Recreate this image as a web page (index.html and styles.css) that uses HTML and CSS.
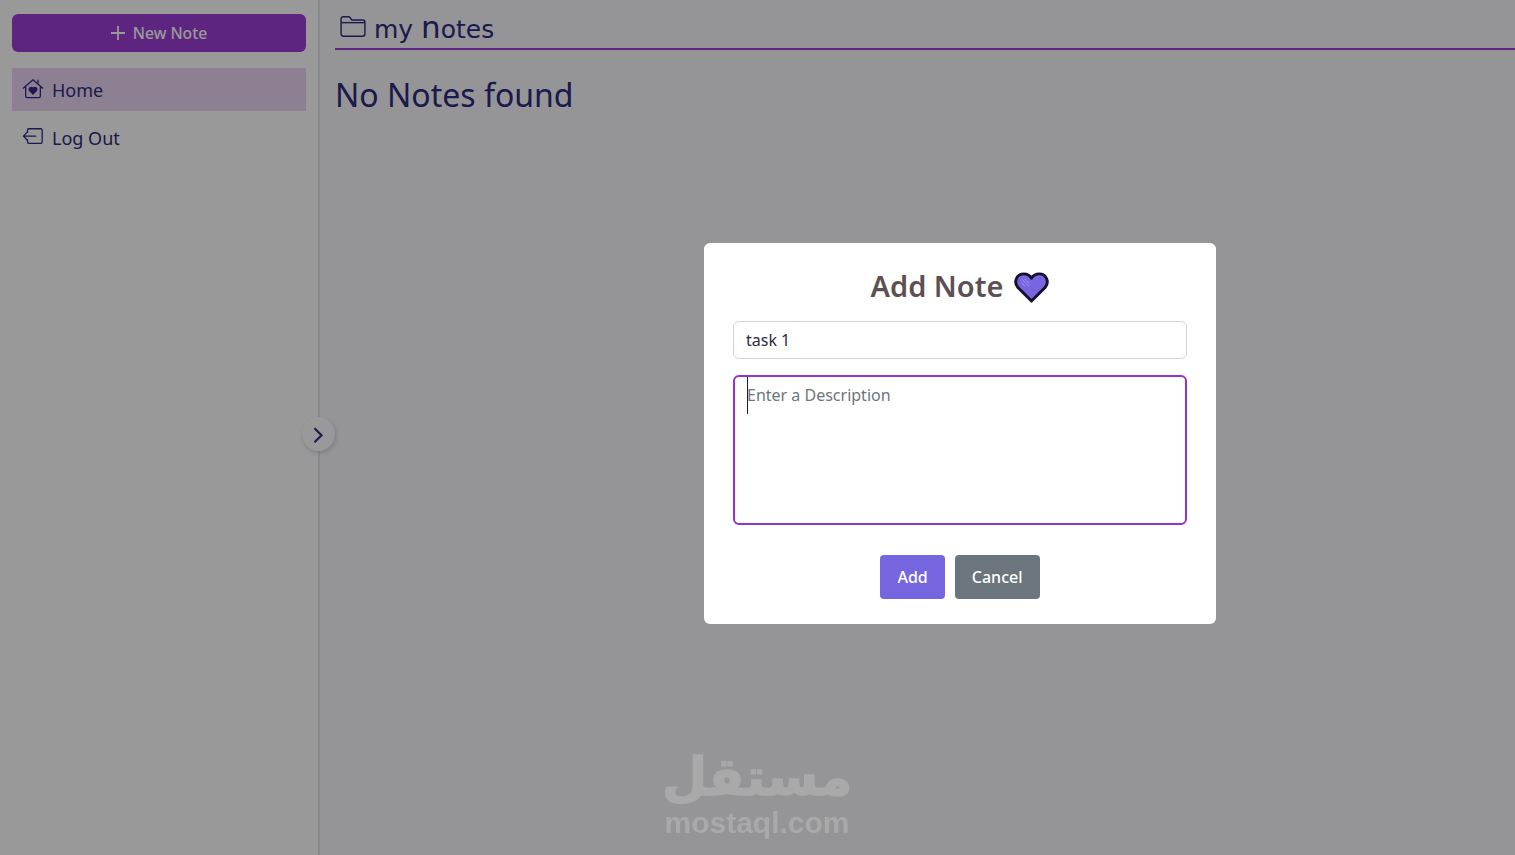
FILE: index.html
```html
<!DOCTYPE html>
<html lang="en">
<head>
    <meta charset="UTF-8">
    <title>My Notes</title>
    <link rel="stylesheet" href="styles.css">
</head>
<body>
    <div class="app">
        <aside class="sidebar">
            <button class="new-note-button">
                <svg class="plus" viewBox="0 0 14 14" fill="none" stroke="currentColor" stroke-width="1.800">
                    <path d="M7 0v14M0 7h14"/>
                </svg>
                New Note
            </button>
            <nav class="nav">
                <a class="nav-item active">
                    <svg class="nav-icon" viewBox="0 0 24 24" fill="none" stroke="currentColor" stroke-width="1.400" stroke-linejoin="round">
                        <path d="M1 11.500 12 2l11 9.500"/>
                        <path d="M4 9.500V20a1.500 1.500 0 0 0 1.500 1.500h13A1.500 1.500 0 0 0 20 20V9.500"/>
                        <path d="M17.500 2v4"/>
                        <path d="M12 17.500 8.200 13.600c-1.700-2.200 1.900-4.600 3.800-2 1.900-2.600 5.500-.2 3.800 2z" fill="currentColor"/>
                    </svg>
                    Home
                </a>
                <a class="nav-item">
                    <svg class="nav-icon" viewBox="0 0 24 24" fill="none" stroke="currentColor" stroke-width="1.400" stroke-linejoin="round" stroke-linecap="round">
                        <path d="M6 7V4.500A1.500 1.500 0 0 1 7.500 3h13A1.500 1.500 0 0 1 22 4.500v13a1.500 1.500 0 0 1-1.500 1.500h-13A1.500 1.500 0 0 1 6 17.500V15"/>
                        <path d="M15 11H1.500M5.500 7l-4 4 4 4"/>
                    </svg>
                    Log Out
                </a>
            </nav>
        </aside>

        <main class="main">
            <header class="main-header">
                <svg class="folder-icon" viewBox="0 0 24 24" fill="none" stroke="currentColor" stroke-width="1.300" stroke-linejoin="round">
                    <path d="M1 6V4.500A2 2 0 0 1 3 2.500h5.500L11 5.500h10A2 2 0 0 1 23 7.500v11a2 2 0 0 1-2 2H3a2 2 0 0 1-2-2z"/>
                    <path d="M1 8h22"/>
                </svg>
                <h1 class="main-title">My <span class="title-word">Notes</span></h1>
            </header>
            <p class="empty-text">No Notes found</p>
        </main>

        <button class="toggle-button">
            <svg viewBox="0 0 12 16" fill="none" stroke="currentColor" stroke-width="1.800">
                <path d="M3 2l6 6-6 6"/>
            </svg>
        </button>
    </div>

    <div class="backdrop">
        <form class="modal">
            <div class="modal-title">
                <h2>Add Note</h2>
                <svg class="heart" viewBox="0 0 36 34">
                    <path d="M18 31 4 17C-1 11 3 3 10 3c4 0 6.500 2 8 4.500C19.500 5 22 3 26 3c7 0 11 8 6 14z" fill="#7766e0" stroke="#17102e" stroke-width="3" stroke-linejoin="round"/>
                    <path d="M9 9l6 7M11.500 8.500l5 6M8 12l4 4.500" stroke="#c3bcf2" stroke-width="1" stroke-dasharray="1 1"/>
                </svg>
            </div>
            <input class="field" type="text" value="task 1">
            <div class="desc-wrap">
                <textarea class="field desc" placeholder="Enter a Description"></textarea>
                <span class="caret"></span>
            </div>
            <div class="modal-actions">
                <button type="button" class="btn btn-add">Add</button>
                <button type="button" class="btn btn-cancel">Cancel</button>
            </div>
        </form>
    </div>

    <div class="watermark">
        <span class="watermark-ar" lang="ar" dir="rtl">مستقل</span>
        <span class="watermark-en">mostaql.com</span>
    </div>
</body>
</html>
```

FILE: styles.css
```css
*{
    box-sizing: border-box;
}
body{
    margin: 0;
    height: 855px;
    overflow: hidden;
    background-color: #f8f9fc;
    color: #2e2a80;
    font-family: "Noto Sans", Arial, sans-serif;
}
.app{
    display: flex;
    height: 100%;
    position: relative;
}
.sidebar{
    width: 320px;
    flex-shrink: 0;
    padding: 14px 12px 0 12px;
    background-color: #ffffff;
    border-right: 2px solid #e3e6ec;
}
.new-note-button{
    display: flex;
    align-items: center;
    justify-content: center;
    gap: 8px;
    width: 100%;
    height: 38px;
    border: none;
    border-radius: 6px;
    background-color: #9b3fd6;
    color: #ffffff;
    font-family: inherit;
    font-size: 15.700px;
    font-weight: 500;
}
.plus{
    width: 14px;
    height: 14px;
}
.nav{
    margin-top: 16px;
}
.nav-item{
    display: flex;
    align-items: center;
    gap: 8px;
    height: 43px;
    padding: 1px 0 0 10px;
    margin-bottom: 5px;
    font-size: 18px;
}
.nav-item.active{
    background-color: #ebd6f5;
}
.nav-icon{
    width: 22px;
    height: 22px;
    margin-top: -2px;
}
.main{
    flex: 1;
    padding: 0 0 0 15px;
}
.main-header{
    display: flex;
    align-items: center;
    gap: 8px;
    height: 50px;
    padding: 6px 0 0 5px;
    border-bottom: 2px solid #9b3fd6;
}
.folder-icon{
    width: 26px;
    height: 26px;
}
.main-title{
    margin: 0;
    font-family: "DejaVu Sans", sans-serif;
    font-size: 25px;
    font-weight: 400;
    text-transform: lowercase;
}
.title-word{
    display: inline-block;
}
.title-word::first-letter{
    font-size: 31px;
}
.empty-text{
    margin: 21px 0 0 0;
    font-size: 32px;
    line-height: 48px;
}
.toggle-button{
    position: absolute;
    left: 302px;
    top: 417px;
    width: 33px;
    height: 34px;
    padding: 9px 10px 9px 9px;
    border: none;
    border-radius: 50%;
    background-color: #ffffff;
    color: #2e2a80;
    box-shadow: 1px 2px 4px rgba(70, 90, 140, 0.25);
}
.backdrop{
    position: fixed;
    inset: 0;
    display: flex;
    align-items: center;
    justify-content: center;
    padding: 12px 0 0 405px;
    background-color: rgba(0, 0, 0, 0.4);
}
.modal{
    width: 512px;
    height: 381px;
    padding: 25px 29px;
    border-radius: 6px;
    background-color: #ffffff;
}
.modal-title{
    display: flex;
    align-items: center;
    justify-content: center;
    gap: 11px;
    height: 38px;
    margin-bottom: 15px;
}
.modal-title h2{
    margin: -3px 0 0 0;
    color: #5d5053;
    font-size: 29px;
    font-weight: 600;
}
.heart{
    width: 35px;
    height: 33px;
}
.field{
    display: block;
    width: 100%;
    height: 38px;
    padding: 0 12px;
    border: 1px solid #ced4da;
    border-radius: 6px;
    color: #2b2a3f;
    font-family: inherit;
    font-size: 16px;
    outline: none;
}
.desc-wrap{
    position: relative;
    margin-top: 16px;
}
.desc{
    height: 150px;
    padding: 7px 12px;
    border: 2px solid #9333cc;
    resize: none;
}
.desc::placeholder{
    color: #6c757d;
    opacity: 1;
}
.caret{
    position: absolute;
    left: 14px;
    top: 2px;
    width: 1px;
    height: 37px;
    background-color: #1d1655;
}
.modal-actions{
    display: flex;
    justify-content: center;
    gap: 10px;
    margin-top: 30px;
}
.btn{
    height: 44px;
    padding: 0 17px;
    border: none;
    border-radius: 4px;
    color: #ffffff;
    font-family: inherit;
    font-size: 16px;
    font-weight: 500;
}
.btn-add{
    background-color: #7566e0;
}
.btn-cancel{
    background-color: #6c757d;
}
.watermark{
    position: fixed;
    left: 665px;
    top: 746px;
    width: 184px;
    display: flex;
    flex-direction: column;
    align-items: center;
    color: #a9a9aa;
    font-weight: 700;
}
.watermark-ar{
    font-family: "DejaVu Sans", sans-serif;
    font-size: 52px;
    line-height: 62px;
    -webkit-text-stroke: 1.500px #a9a9aa;
}
.watermark-en{
    font-family: "Liberation Sans", Arial, sans-serif;
    font-size: 30px;
    line-height: 30px;
}
```
